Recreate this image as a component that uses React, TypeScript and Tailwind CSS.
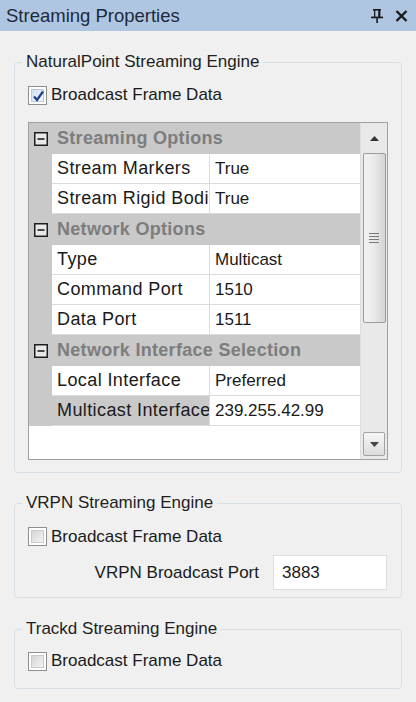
import React from "react";

type Row =
  | { kind: "head"; label: string }
  | { kind: "item"; name: string; value: string; selected?: boolean };

const rows: Row[] = [
  { kind: "head", label: "Streaming Options" },
  { kind: "item", name: "Stream Markers", value: "True" },
  { kind: "item", name: "Stream Rigid Bodies", value: "True" },
  { kind: "head", label: "Network Options" },
  { kind: "item", name: "Type", value: "Multicast" },
  { kind: "item", name: "Command Port", value: "1510" },
  { kind: "item", name: "Data Port", value: "1511" },
  { kind: "head", label: "Network Interface Selection" },
  { kind: "item", name: "Local Interface", value: "Preferred" },
  { kind: "item", name: "Multicast Interface", value: "239.255.42.99", selected: true },
];

function CheckBox({ checked }: { checked?: boolean }) {
  return (
    <div className="w-[19px] h-[19px] border border-[#8e8f8f] bg-white p-[2px] shrink-0">
      <div
        className={
          checked
            ? "w-full h-full border border-[#b7c8dc] bg-gradient-to-br from-[#cfdcee] to-[#f7fbff] relative"
            : "w-full h-full border border-[#c9c9c9] bg-gradient-to-br from-[#d4d4d4] to-[#f5f5f5]"
        }
      >
        {checked && (
          <svg width="15" height="15" viewBox="0 0 15 15" className="absolute -left-[1px] -top-[1px]">
            <path d="M3 7.5 L6 11 L12 2.5" fill="none" stroke="#1d3d95" strokeWidth="2.2" />
          </svg>
        )}
      </div>
    </div>
  );
}

function Minus() {
  return (
    <svg width="14" height="14" viewBox="0 0 14 14">
      <rect x="0.75" y="0.75" width="12.5" height="12.5" fill="#e9e9e9" stroke="#1f1f1f" strokeWidth="1.5" />
      <path d="M3.5 7 H10.5" stroke="#1f1f1f" strokeWidth="1.6" />
    </svg>
  );
}

function Group({ title, className, children }: { title: string; className?: string; children: React.ReactNode }) {
  return (
    <fieldset className={"mx-[14px] border border-[#d5dfe5] rounded-[4px] " + (className ?? "")}>
      <legend className="ml-[7px] px-[4px] leading-[22px] text-[17px] text-[#1e1e1e]">{title}</legend>
      {children}
    </fieldset>
  );
}

function Scrollbar() {
  return (
    <div className="w-[27px] bg-[#e9e9e9] border-l border-[#dedede] flex flex-col items-center">
      <div className="h-[30px] w-full flex items-center justify-center">
        <svg width="9" height="5" viewBox="0 0 9 5">
          <path d="M0 5 L4.5 0 L9 5 Z" fill="#333" />
        </svg>
      </div>
      <div className="h-[170px] w-[23px] border border-[#9b9b9b] rounded-[2px] bg-gradient-to-r from-[#f3f3f3] via-[#e9e9e9] to-[#d4d4d4] flex flex-col items-center justify-center gap-[2px]">
        <div className="w-[10px] h-[1px] bg-[#7a7a7a]" />
        <div className="w-[10px] h-[1px] bg-[#7a7a7a]" />
        <div className="w-[10px] h-[1px] bg-[#7a7a7a]" />
        <div className="w-[10px] h-[1px] bg-[#7a7a7a]" />
      </div>
      <div className="flex-1" />
      <div className="h-[24px] w-[22px] mb-[3px] border border-[#a3a3a3] rounded-[2px] bg-gradient-to-b from-[#f7f7f7] to-[#dcdcdc] flex items-center justify-center">
        <svg width="9" height="5" viewBox="0 0 9 5">
          <path d="M0 0 L4.5 5 L9 0 Z" fill="#444" />
        </svg>
      </div>
    </div>
  );
}

function PropertyGrid() {
  return (
    <div className="h-[338px] border border-[#a0a0a0] flex bg-white">
      <div className="flex-1 flex flex-col min-w-0">
        {rows.map((r, i) =>
          r.kind === "head" ? (
            <div key={i} className="h-[31px] flex items-center bg-[#c9c9c9]">
              <div className="w-[23px] flex justify-center pl-[1px]">
                <Minus />
              </div>
              <span className="pl-[5px] font-bold text-[18px] tracking-[0.3px] text-[#7d7d7d] whitespace-nowrap overflow-hidden">
                {r.label}
              </span>
            </div>
          ) : (
            <div key={i} className="h-[30px] flex bg-[#c9c9c9]">
              <div className="w-[23px]" />
              <div
                className={
                  "w-[158px] flex items-center pl-[5px] border-b border-r border-[#dcdcdc] whitespace-nowrap overflow-hidden text-[18px] tracking-[0.4px] text-[#1a1a1a] " +
                  (r.selected ? "bg-[#c9c9c9]" : "bg-white")
                }
              >
                {r.name}
              </div>
              <div className="flex-1 flex items-center pl-[5px] bg-white border-b border-[#dcdcdc] whitespace-nowrap overflow-hidden text-[17px] text-[#1a1a1a]">
                {r.value}
              </div>
            </div>
          )
        )}
        <div className="flex-1 bg-white" />
      </div>
      <Scrollbar />
    </div>
  );
}

export default function App() {
  return (
    <div
      className="w-[416px] min-h-[702px] bg-[#f0f0f0] text-[#1a1a1a]"
      style={{ fontFamily: '"Liberation Sans", Arial, sans-serif' }}
    >
      <div className="h-[31px] bg-[#afc6e2] flex items-center pl-[6px] pr-[8px]">
        <span className="text-[18.5px] text-[#1c2a3a] flex-1">Streaming Properties</span>
        <svg width="12" height="14" viewBox="0 0 12 14" className="mr-[12px]">
          <rect x="2" y="0" width="8" height="1.6" fill="#1b1b1b" />
          <rect x="3" y="1" width="1.3" height="7" fill="#1b1b1b" />
          <rect x="7.2" y="1" width="2.2" height="7" fill="#1b1b1b" />
          <rect x="0" y="7.6" width="12" height="1.7" fill="#1b1b1b" />
          <rect x="5.3" y="9" width="1.6" height="5" fill="#1b1b1b" />
        </svg>
        <svg width="13" height="12" viewBox="0 0 13 12">
          <path d="M1.5 1 L11.5 11 M11.5 1 L1.5 11" stroke="#1b1b1b" strokeWidth="2.4" />
        </svg>
      </div>

      <Group title="NaturalPoint Streaming Engine" className="mt-[20px]">
        <div className="px-[13px] pt-[12px] pb-[12px]">
          <label className="flex items-center gap-[4px] h-[20px] text-[17px]">
            <CheckBox checked />
            <span>Broadcast Frame Data</span>
          </label>
          <div className="mt-[17px]">
            <PropertyGrid />
          </div>
        </div>
      </Group>

      <Group title="VRPN Streaming Engine" className="mt-[19px]">
        <div className="pl-[13px] pr-[14px] pt-[12px] pb-[7px]">
          <label className="flex items-center gap-[4px] h-[21px] text-[17px]">
            <CheckBox />
            <span>Broadcast Frame Data</span>
          </label>
          <div className="mt-[8px] flex items-center justify-end gap-[14px]">
            <span className="text-[17px]">VRPN Broadcast Port</span>
            <div className="w-[114px] h-[35px] bg-white border border-[#dcdfe3] pl-[8px] pt-[4px] text-[17px]">3883</div>
          </div>
        </div>
      </Group>

      <Group title="Trackd Streaming Engine" className="mt-[20px]">
        <div className="px-[13px] pt-[10px] pb-[16px]">
          <label className="flex items-center gap-[4px] h-[22px] text-[17px]">
            <CheckBox />
            <span>Broadcast Frame Data</span>
          </label>
        </div>
      </Group>
    </div>
  );
}
